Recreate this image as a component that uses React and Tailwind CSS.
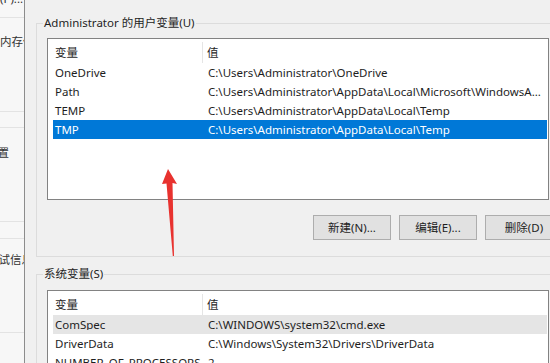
import React from "react";

const font = { fontFamily: '"Noto Sans", "Noto Sans CJK SC", sans-serif' };

const userVars = [
  ["OneDrive", "C:\\Users\\Administrator\\OneDrive"],
  ["Path", "C:\\Users\\Administrator\\AppData\\Local\\Microsoft\\WindowsA..."],
  ["TEMP", "C:\\Users\\Administrator\\AppData\\Local\\Temp"],
  ["TMP", "C:\\Users\\Administrator\\AppData\\Local\\Temp"],
];

const sysVars = [
  ["ComSpec", "C:\\WINDOWS\\system32\\cmd.exe"],
  ["DriverData", "C:\\Windows\\System32\\Drivers\\DriverData"],
  ["NUMBER_OF_PROCESSORS", "2"],
];

const VarList = ({ rows, selected, hover, height }) => (
  <div className={`w-[502px] border border-[#828282] bg-white overflow-hidden ${height}`}>
    <div className="flex h-[24px] pt-[3px] items-center text-[#1e1e1e]">
      <div className="w-[155px] shrink-0 pl-[7px] border-r border-[#e5e5e5] h-[21px] flex items-center">变量</div>
      <div className="pl-[4px]">值</div>
    </div>
    {rows.map(([name, value], i) => (
      <div
        key={name}
        className={`ml-[5px] mr-[1px] flex h-[19px] items-center ${
          i === selected ? "bg-[#0078d7] text-white" : i === hover ? "bg-[#e5e5e5] text-[#1e1e1e]" : "text-[#1e1e1e]"
        }`}
      >
        <div className="w-[155px] shrink-0 pl-[2px] whitespace-nowrap overflow-hidden">{name}</div>
        <div className="whitespace-nowrap">{value}</div>
      </div>
    ))}
  </div>
);

const Button = ({ children }) => (
  <button className="w-[78px] h-[25px] shrink-0 bg-[#e1e1e1] border border-[#adadad] text-[#1e1e1e] text-[11.5px]">
    {children}
  </button>
);

export default function App() {
  return (
    <div className="relative flex w-[550px] h-[363px] overflow-hidden text-[11.5px] leading-none" style={font}>
      {/* left settings window behind */}
      <div className="w-[25px] shrink-0 bg-[#f7f7f7] border-r border-[#8c8c8c] text-[#333] overflow-hidden whitespace-nowrap">
        <div className="h-[25px] border-b border-[#e3e3e3]">
          <div className="-mt-[7px]">(P)...</div>
        </div>
        <div className="h-[94px] border-b border-[#e3e3e3] pt-[18px]">内存使用</div>
        <div className="h-[16px] border-b border-[#e3e3e3]"></div>
        <div className="h-[94px] border-b border-[#e3e3e3] pt-[19px] -ml-[14px]">设置</div>
        <div className="h-[17px] border-b border-[#e3e3e3]"></div>
        <div className="h-[94px] border-b border-[#e3e3e3] pt-[15px] -ml-[13px]">调试信息</div>
      </div>

      {/* environment variables dialog, wider than the window */}
      <div className="w-[600px] shrink-0 bg-[#f0f0f0] pl-[11px] pt-[15px]">
        <fieldset className="w-[560px] h-[242px] border border-[#dcdcdc] pl-[10px]">
          <legend className="-ml-[4px] px-[1px] h-[16px] leading-[16px] text-[#1e1e1e]">Administrator 的用户变量(U)</legend>
          <div className="mt-[7px]">
            <VarList rows={userVars} selected={3} height="h-[162px]" />
          </div>
          <div className="flex gap-[8px] pl-[266px] mt-[15px]">
            <Button>新建(N)...</Button>
            <Button>编辑(E)...</Button>
            <Button>删除(D)</Button>
          </div>
        </fieldset>

        <fieldset className="mt-[9px] w-[560px] h-[120px] border border-[#dcdcdc] pl-[10px]">
          <legend className="-ml-[4px] px-[1px] h-[16px] leading-[16px] text-[#1e1e1e]">系统变量(S)</legend>
          <div className="mt-[8px]">
            <VarList rows={sysVars} hover={0} height="h-[100px]" />
          </div>
        </fieldset>
      </div>

      {/* red annotation arrow */}
      <svg className="absolute left-0 top-0 pointer-events-none" width="550" height="363">
        <path d="M168 169 L177 184 L172.5 183 L174 256 L172.8 256 L166.5 183.5 L162 184 Z" fill="#e8322f" />
      </svg>
    </div>
  );
}
